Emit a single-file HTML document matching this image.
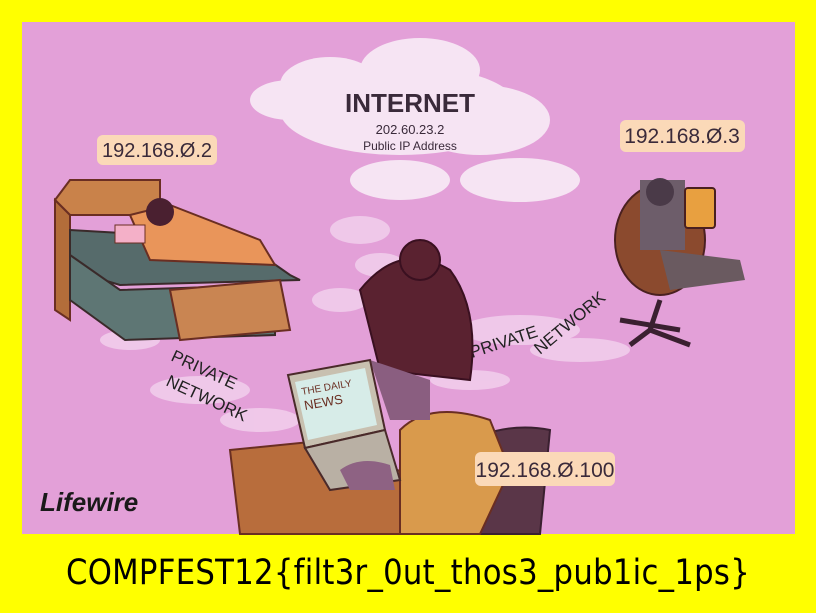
<!DOCTYPE html>
<html><head><meta charset="utf-8"><style>
html,body{margin:0;padding:0;}
body{width:816px;height:613px;background:#ffff00;position:relative;overflow:hidden;}
svg{position:absolute;left:0;top:0;}
.flag{position:absolute;left:0;width:816px;top:553px;text-align:center;font-family:"DejaVu Sans Condensed","DejaVu Sans",sans-serif;font-size:35px;color:#000;letter-spacing:0.3px;transform:scaleX(0.975);}
</style></head><body>
<svg width="816" height="613" viewBox="0 0 816 613" font-family="Liberation Sans, sans-serif">
<rect x="22" y="22" width="773" height="512" fill="#e3a0d8"/>
<g fill="#f2d2ee" opacity="0.8">
<ellipse cx="360" cy="230" rx="30" ry="14"/><ellipse cx="380" cy="265" rx="25" ry="12"/><ellipse cx="340" cy="300" rx="28" ry="12"/>
<ellipse cx="130" cy="340" rx="30" ry="10"/><ellipse cx="200" cy="390" rx="50" ry="14"/><ellipse cx="260" cy="420" rx="40" ry="12"/>
<ellipse cx="520" cy="330" rx="60" ry="15"/><ellipse cx="580" cy="350" rx="50" ry="12"/><ellipse cx="470" cy="380" rx="40" ry="10"/>
</g>
<g fill="#f6e4f3">
<ellipse cx="400" cy="110" rx="120" ry="45"/><ellipse cx="330" cy="85" rx="50" ry="28"/><ellipse cx="420" cy="70" rx="60" ry="32"/>
<ellipse cx="480" cy="120" rx="70" ry="35"/><ellipse cx="520" cy="180" rx="60" ry="22"/><ellipse cx="400" cy="180" rx="50" ry="20"/>
<ellipse cx="290" cy="100" rx="40" ry="20"/>
</g>
<text x="410" y="112" text-anchor="middle" font-size="26" fill="#3a2a3a" font-weight="bold">INTERNET</text>
<text x="410" y="134" text-anchor="middle" font-size="13" fill="#3a2a3a">202.60.23.2</text>
<text x="410" y="150" text-anchor="middle" font-size="12" fill="#3a2a3a">Public IP Address</text>
<rect x="97" y="135" width="120" height="30" rx="6" fill="#fbd9b8"/>
<text x="157" y="157" text-anchor="middle" font-size="20" fill="#3a2a3a">192.168.Ø.2</text>
<rect x="620" y="120" width="125" height="32" rx="6" fill="#fbd9b8"/>
<text x="682" y="143" text-anchor="middle" font-size="21" fill="#3a2a3a">192.168.Ø.3</text>
<text transform="translate(170,360) rotate(25)" font-size="17" fill="#222">PRIVATE</text>
<text transform="translate(165,385) rotate(25)" font-size="17" fill="#222">NETWORK</text>
<text transform="translate(472,358) rotate(-18)" font-size="17" fill="#222">PRIVATE</text>
<text transform="translate(540,355) rotate(-40)" font-size="17" fill="#222">NETWORK</text>
<path d="M55 200 L70 180 L160 180 L160 215 L70 215 Z" fill="#c9824a" stroke="#6a2e22" stroke-width="2"/>
<path d="M55 200 L70 215 L70 320 L55 310 Z" fill="#b36d3a" stroke="#6a2e22" stroke-width="2"/>
<path d="M70 230 L240 240 L290 275 L300 280 L120 285 L70 270 Z" fill="#566b6b" stroke="#3a2a2a" stroke-width="2"/>
<path d="M70 255 L120 290 L275 285 L275 335 L125 340 L70 300Z" fill="#5e7674" stroke="#3a2a2a" stroke-width="2"/>
<path d="M170 290 L280 280 L290 330 L180 340 Z" fill="#c98552" stroke="#6a2e22" stroke-width="2"/>
<path d="M130 215 L170 205 L260 240 L275 265 L150 260 Z" fill="#e9955a" stroke="#6a2e22" stroke-width="2"/>
<circle cx="160" cy="212" r="14" fill="#4a2030"/>
<rect x="115" y="225" width="30" height="18" fill="#f4b0c8" stroke="#6a2e22"/>
<ellipse cx="660" cy="240" rx="45" ry="55" fill="#8b4a2e" stroke="#4a2020" stroke-width="2"/>
<rect x="640" y="180" width="45" height="70" fill="#6d5d6a"/>
<circle cx="660" cy="192" r="14" fill="#4a3a48"/>
<rect x="685" y="188" width="30" height="40" rx="3" fill="#e8a040" stroke="#4a2020" stroke-width="2"/>
<path d="M660 250 L740 260 L745 280 L670 290Z" fill="#6a5a60"/>
<path d="M660 300 L650 330 M620 320 L680 330 M650 330 L630 345 M650 330 L690 345" stroke="#3a2030" stroke-width="5" fill="none"/>
<path d="M230 450 L330 440 L420 480 L420 534 L240 534 Z" fill="#b86d3c" stroke="#6a2e22" stroke-width="2"/>
<path d="M450 450 Q500 420 550 430 L540 534 L460 534 Z" fill="#5a3648" stroke="#3a2030" stroke-width="2"/>
<path d="M400 430 Q430 400 490 420 L510 470 L480 534 L400 534 Z" fill="#d99a4c" stroke="#6a2e22" stroke-width="2"/>
<path d="M360 290 Q400 240 450 270 Q480 310 470 380 L380 370 Z" fill="#5a2230" stroke="#3a1020" stroke-width="2"/>
<circle cx="420" cy="260" r="20" fill="#5a2230" stroke="#3a1020" stroke-width="2"/>
<path d="M370 360 L390 420 L430 420 L430 380Z" fill="#8a5e80"/>
<path d="M288 375 L370 360 L385 430 L305 448 Z" fill="#c8c0b0" stroke="#4a2a2a" stroke-width="2"/>
<path d="M295 382 L365 368 L377 425 L308 440 Z" fill="#d7ece8"/>
<text transform="translate(302,395) rotate(-10)" font-size="10" fill="#6a2e22">THE DAILY</text>
<text transform="translate(305,410) rotate(-10)" font-size="13" fill="#6a2e22">NEWS</text>
<path d="M305 448 L385 430 L400 480 L330 490 Z" fill="#b9b0a4" stroke="#4a2a2a" stroke-width="2"/>
<path d="M340 470 Q360 455 390 465 L395 490 L350 490Z" fill="#8e6283"/>
<rect x="475" y="452" width="140" height="34" rx="6" fill="#fbd9b8"/>
<text x="545" y="477" text-anchor="middle" font-size="21" fill="#3a2a3a">192.168.Ø.100</text>
<text x="40" y="511" font-size="26" font-style="italic" font-weight="bold" fill="#1a1a1a">Lifewire</text>
</svg>
<div class="flag">COMPFEST12{filt3r_0ut_thos3_pub1ic_1ps}</div>
</body></html>
